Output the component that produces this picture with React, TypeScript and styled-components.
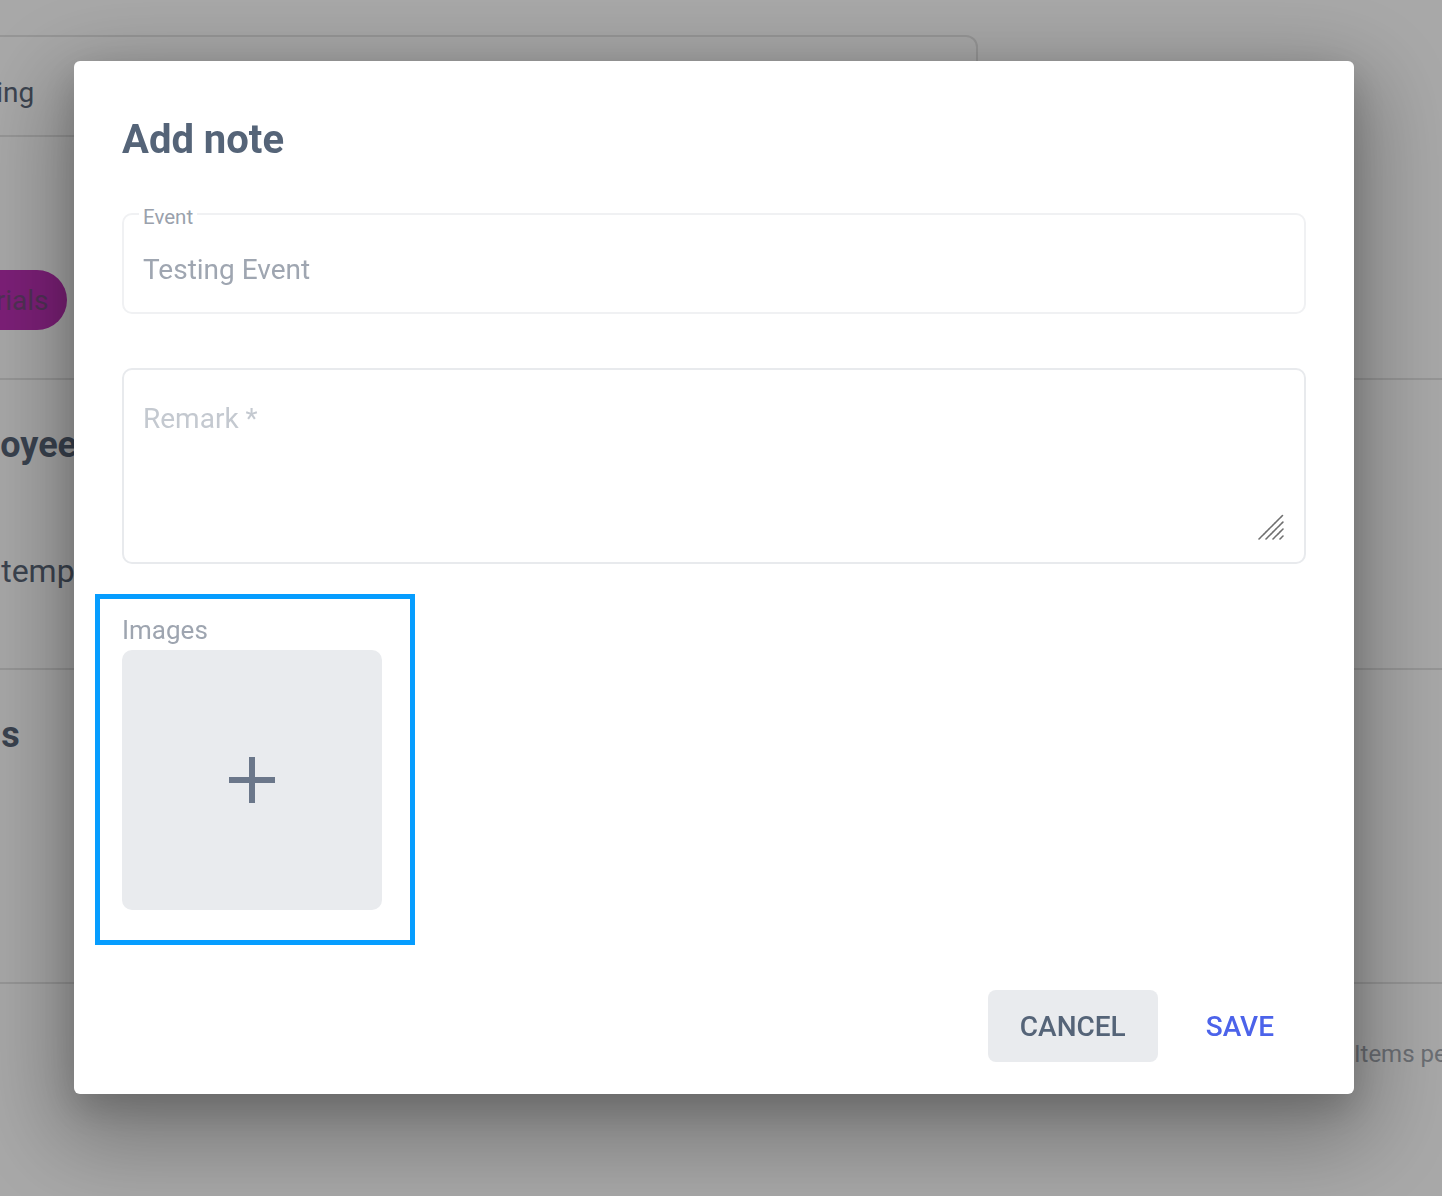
import React from "react";
import styled, { createGlobalStyle } from "styled-components";

const GlobalStyle = createGlobalStyle`
  html, body {
    margin: 0;
    padding: 0;
    font-family: Roboto, "Liberation Sans", Arial, sans-serif;
  }
  * { box-sizing: border-box; }
`;

/* ---------- background page ---------- */
const Page = styled.div`
  width: 100%;
  height: 100vh;
  overflow: hidden;
  background: #ffffff;
`;

const BgColumn = styled.div`
  margin-left: -100px;
  width: 1542px;
  padding-top: 35px;
  display: flex;
  flex-direction: column;
`;

const TabBar = styled.div`
  width: 1078px;
  height: 102px;
  border: 2px solid #e4e4e4;
  border-radius: 12px 12px 0 0;
  display: flex;
  align-items: center;
  padding: 12px 0 0 32px;
  font-size: 28px;
  color: #5b6779;
`;

const Pill = styled.div`
  align-self: flex-start;
  margin-top: 133px;
  height: 60px;
  padding: 0 19px 0 32px;
  border-radius: 30px;
  background: #bd30b6;
  color: #7a4a82;
  font-size: 28px;
  display: flex;
  align-items: center;
`;

const BgSection = styled.section<{ $h: number; $mt?: number }>`
  margin-top: ${(p) => p.$mt ?? 0}px;
  height: ${(p) => p.$h}px;
  border-top: 2px solid #e4e4e4;
  padding-top: 43px;
  display: flex;
  flex-direction: column;
`;

const BgHeading = styled.div<{ $indent: number }>`
  padding-left: ${(p) => p.$indent}px;
  font-size: 36px;
  line-height: 44px;
  font-weight: 700;
  color: #586578;
`;

const BgText = styled.div<{ $indent: number }>`
  margin-top: 84px;
  padding-left: ${(p) => p.$indent}px;
  font-size: 32px;
  line-height: 40px;
  color: #5b6779;
`;

const BgFooter = styled.div`
  border-top: 2px solid #e4e4e4;
  padding-top: 54px;
  padding-left: 1454px;
  font-size: 24px;
  line-height: 32px;
  color: #a3a8b0;
  white-space: nowrap;
`;

/* ---------- overlay + modal ---------- */
const Backdrop = styled.div`
  position: fixed;
  inset: 0;
  background: rgba(0, 0, 0, 0.34);
  display: flex;
  align-items: flex-start;
  padding: 61px 0 0 74px;
`;

const Modal = styled.div`
  width: 1280px;
  background: #ffffff;
  border-radius: 6px;
  padding: 0 48px 32px 48px;
  display: flex;
  flex-direction: column;
  box-shadow: 0 30px 90px 18px rgba(0, 0, 0, 0.3),
    0 14px 36px rgba(0, 0, 0, 0.16);
`;

const Title = styled.h2`
  margin: 55px 0 0 0;
  font-size: 40px;
  line-height: 48px;
  font-weight: 700;
  color: #556478;
`;

const OutlinedField = styled.div`
  position: relative;
  margin-top: 49px;
  height: 101px;
  border: 2px solid #f0f1f3;
  border-radius: 10px;
  padding: 38px 19px 0 19px;
`;

const FloatingLabel = styled.span`
  position: absolute;
  top: -10px;
  left: 15px;
  padding: 0 4px;
  background: #ffffff;
  font-size: 20.5px;
  line-height: 24px;
  color: #9aa1ac;
`;

const FieldValue = styled.div`
  font-size: 28px;
  line-height: 34px;
  color: #9fa6b1;
`;

const TextAreaWrap = styled.div`
  position: relative;
  margin-top: 54px;
  height: 196px;
`;

const TextArea = styled.textarea`
  width: 100%;
  height: 100%;
  resize: none;
  border: 2px solid #e8eaed;
  border-radius: 10px;
  padding: 32px 19px;
  font-family: Roboto, "Liberation Sans", Arial, sans-serif;
  font-size: 28px;
  line-height: 34px;
  color: #4b5563;
  outline: none;
  &::placeholder {
    color: #c4c9d0;
  }
`;

const ResizeHandle = styled.svg`
  position: absolute;
  right: 22px;
  bottom: 24px;
  width: 26px;
  height: 26px;
  pointer-events: none;
`;

const ImagesSection = styled.div`
  margin-top: 30px;
  margin-left: -27px;
  width: 320px;
  border: 5px solid #069dff;
  padding: 16px 28px 30px 22px;
  display: flex;
  flex-direction: column;
`;

const SectionLabel = styled.div`
  font-size: 26px;
  line-height: 30px;
  color: #9ea5b0;
  margin-bottom: 5px;
`;

const UploadTile = styled.button`
  width: 260px;
  height: 260px;
  border: none;
  border-radius: 10px;
  background: #e9ebee;
  display: flex;
  align-items: center;
  justify-content: center;
  padding: 0;
  cursor: pointer;
`;

const Actions = styled.div`
  margin-top: 45px;
  display: flex;
  justify-content: flex-end;
  gap: 16px;
`;

const ActionButton = styled.button<{ $variant: "muted" | "primary" }>`
  height: 72px;
  padding: 0 32px;
  border: none;
  border-radius: 8px;
  font-family: Roboto, "Liberation Sans", Arial, sans-serif;
  font-size: 28px;
  font-weight: 500;
  text-transform: uppercase;
  cursor: pointer;
  background: ${(p) => (p.$variant === "muted" ? "#e9ebee" : "transparent")};
  color: ${(p) => (p.$variant === "muted" ? "#556478" : "#4c63ea")};
`;

export default function App() {
  return (
    <>
      <GlobalStyle />
      <Page>
        <BgColumn>
          <TabBar>Training</TabBar>
          <Pill>Materials</Pill>
          <BgSection $h={290} $mt={48}>
            <BgHeading $indent={19}>Employees</BgHeading>
            <BgText $indent={39}>Use template</BgText>
          </BgSection>
          <BgSection $h={314}>
            <BgHeading $indent={8}>Details</BgHeading>
          </BgSection>
          <BgFooter>Items per page</BgFooter>
        </BgColumn>
      </Page>
      <Backdrop>
        <Modal>
          <Title>Add note</Title>
          <OutlinedField>
            <FloatingLabel>Event</FloatingLabel>
            <FieldValue>Testing Event</FieldValue>
          </OutlinedField>
          <TextAreaWrap>
            <TextArea placeholder="Remark *" />
            <ResizeHandle viewBox="0 0 26 26">
              <g stroke="#6f6f6f" strokeWidth="1.6" strokeLinecap="round" strokeDasharray="2.2 0.9">
                <line x1="1" y1="25" x2="25" y2="1" />
                <line x1="8" y1="25" x2="25" y2="8" />
                <line x1="15" y1="25" x2="25" y2="15" />
                <line x1="22" y1="25" x2="25" y2="22" />
              </g>
            </ResizeHandle>
          </TextAreaWrap>
          <ImagesSection>
            <SectionLabel>Images</SectionLabel>
            <UploadTile aria-label="Add image">
              <svg width="48" height="48" viewBox="0 0 48 48">
                <rect x="21" y="1" width="6" height="46" fill="#6b778a" />
                <rect x="1" y="21" width="46" height="6" fill="#6b778a" />
              </svg>
            </UploadTile>
          </ImagesSection>
          <Actions>
            <ActionButton $variant="muted">Cancel</ActionButton>
            <ActionButton $variant="primary">Save</ActionButton>
          </Actions>
        </Modal>
      </Backdrop>
    </>
  );
}
